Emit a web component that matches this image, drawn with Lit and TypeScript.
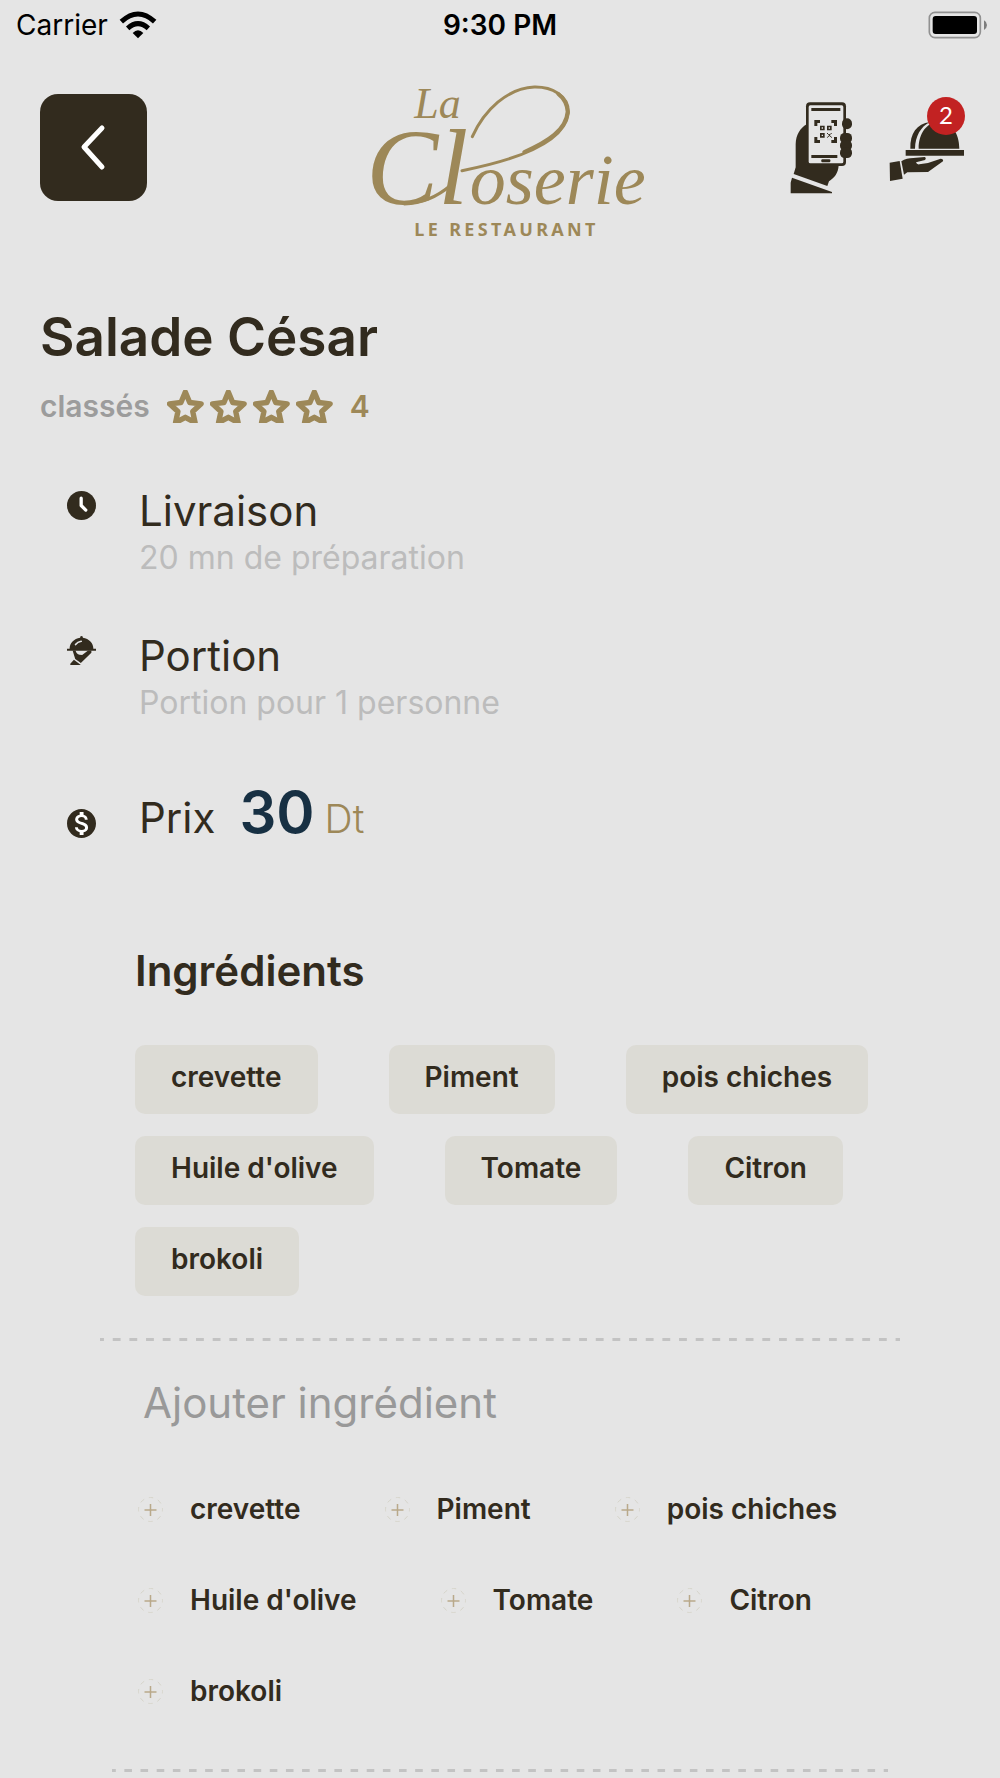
import { LitElement, html, css } from "lit";
import { customElement, property } from "lit/decorators.js";

const INGREDIENTS = ["crevette", "Piment", "pois chiches", "Huile d'olive", "Tomate", "Citron", "brokoli"];

const clockIcon = html`<svg class="glyph" viewBox="0 0 88 88" aria-hidden="true">
  <circle cx="44" cy="44" r="44" fill="#322b1e" />
  <path d="M43 22v22l14 14" fill="none" stroke="#fff" stroke-width="10" stroke-linecap="round" stroke-linejoin="round" />
</svg>`;

const portionIcon = html`<svg class="glyph" viewBox="80 498 88 88" aria-hidden="true">
  <path fill="#322b1e" d="M88 537c0-18 13-31 32-34v-3q4-4 8 0v3c19 3 32 16 32 34h8v6H80v-6z" />
  <path fill="none" stroke="#e5e5e5" stroke-width="5" stroke-linecap="round" d="M106 524q6-8 17-10" />
  <path fill="#322b1e" d="M97 542h9q2 10 12 13l8 1 18-14h10v7l-32 31-17-12zM90 586v-4l11-12 21 16z" />
</svg>`;

const priceIcon = html`<svg class="glyph" viewBox="2 2 20 20" aria-hidden="true">
  <circle cx="12" cy="12" r="9" fill="#fff" />
  <path fill="#322b1e" d="M12 2C6.48 2 2 6.48 2 12s4.48 10 10 10 10-4.48 10-10S17.52 2 12 2zm1.41 16.09V20h-2.67v-1.93c-1.71-.36-3.16-1.46-3.27-3.4h1.96c.1 1.05.82 1.87 2.65 1.87 1.96 0 2.4-.98 2.4-1.59 0-.83-.44-1.61-2.67-2.14-2.48-.6-4.18-1.62-4.18-3.67 0-1.72 1.39-2.84 3.11-3.21V4h2.67v1.95c1.86.45 2.79 1.86 2.85 3.39H14.3c-.05-1.11-.64-1.87-2.22-1.87-1.5 0-2.4.68-2.4 1.64 0 .84.65 1.39 2.67 1.91s4.18 1.39 4.18 3.91c-.02 1.83-1.38 2.83-3.12 3.16z" />
</svg>`;

@customElement("status-bar")
export class StatusBar extends LitElement {
  static styles = css`
    :host {
      display: grid;
      grid-template-columns: 1fr auto 1fr;
      align-items: center;
      height: 50px;
      padding: 0 12px;
      font: 400 28px/50px Inter, sans-serif;
      color: #000;
    }
    .carrier { display: flex; align-items: center; gap: 11px; padding-left: 4px; }
    .wifi { width: 38px; height: 28px; }
    .time { font-weight: 600; }
    .battery { width: 60px; height: 28px; justify-self: end; }
  `;
  render() {
    return html`
      <div class="carrier">
        <span>Carrier</span>
        <svg class="wifi" viewBox="359 29 114 84" role="img" aria-label="Wi-Fi">
          <path d="M366 61Q416 15 466 61M385 81Q416 53 447 81" fill="none" stroke="#000" stroke-width="15" />
          <path d="M400 95Q416 79 432 95L416 111z" />
        </svg>
      </div>
      <time class="time">9:30 PM</time>
      <svg class="battery" viewBox="474 30 180 84" role="img" aria-label="Batterie pleine">
        <rect x="478" y="34" width="153" height="76" rx="17" fill="none" stroke="#919191" stroke-width="5" />
        <rect x="488" y="45" width="133" height="54" rx="9" />
        <path d="M642 58q9 5 9 14t-9 15z" fill="#7d7d7d" />
      </svg>
    `;
  }
}

@customElement("brand-logo")
export class BrandLogo extends LitElement {
  static styles = css`
    :host { display: block; width: 290px; }
    .art { display: block; width: 100%; height: auto; fill: #9d8858; }
    .script { font-family: "Liberation Serif", serif; font-style: italic; }
    .small { font-size: 132px; }
    .large { font-size: 324px; }
    .body { font-size: 216px; }
    .tagline { font: 700 54px "Noto Sans", sans-serif; letter-spacing: 10px; }
    .swash { fill: none; stroke: #9d8858; stroke-width: 9; stroke-linecap: round; }
    .bold { stroke-width: 12; }
  `;
  render() {
    return html`<svg class="art" viewBox="21 0 870 516" role="img" aria-label="La Closerie, le restaurant">
      <text class="script small" x="190" y="144">La</text>
      <text class="script large" x="46" y="402">Cl</text>
      <text class="script body" x="356" y="402">oserie</text>
      <path class="swash" d="M333 302C470 275 640 225 652 130C655 75 600 50 550 51C470 54 400 120 364 200" />
      <path class="swash bold" d="M520 246C590 215 646 180 650 125C648 100 640 86 622 72" />
      <path class="swash" d="M160 402C215 400 262 378 300 345" />
      <text class="tagline" x="190" y="497">LE RESTAURANT</text>
    </svg>`;
  }
}

@customElement("app-header")
export class AppHeader extends LitElement {
  @property({ type: Number }) orders = 2;
  static styles = css`
    :host {
      display: grid;
      grid-template-columns: 1fr auto 1fr;
      align-items: start;
      padding: 20px 34px 0 40px;
    }
    button { border: 0; padding: 0; background: none; cursor: pointer; }
    .back {
      display: grid;
      place-items: center;
      width: 107px;
      height: 107px;
      margin-top: 24px;
      border-radius: 18px;
      background: #322b1e;
    }
    .chevron { width: 28px; height: 48px; }
    .actions { display: flex; justify-self: end; gap: 32px; margin-top: 24px; }
    .action { position: relative; display: block; height: 100px; color: #322b1e; }
    .action svg { display: block; height: 100px; }
    .scan svg { width: 66px; }
    .order svg { width: 80px; }
    .badge {
      position: absolute;
      top: 3px;
      right: 1px;
      width: 38px;
      height: 38px;
      border-radius: 50%;
      background: #c22222;
      color: #fff;
      font: 400 24px/36px Lato, sans-serif;
      text-align: center;
    }
  `;
  render() {
    return html`
      <button class="back" aria-label="Retour">
        <svg class="chevron" viewBox="0 0 28 48" aria-hidden="true">
          <path d="M22 4L4 23l18 20" fill="none" stroke="#fff" stroke-width="5" stroke-linecap="round" stroke-linejoin="round" />
        </svg>
      </button>
      <brand-logo></brand-logo>
      <div class="actions">
        <button class="action scan" aria-label="Scanner le code">
          <svg viewBox="54 282 198 300" fill="currentColor" aria-hidden="true">
            <path d="M110 373C90 385 78 405 77 432V502L71 522L172 558L177 544C192 535 205 520 206 496L110 490zM66 533L186 576V580H62V548z" />
            <rect x="108" y="307" width="120" height="191" rx="12" />
            <rect x="116" y="316" width="104" height="174" rx="5" fill="#e5e5e5" />
            <rect x="216" y="355" width="30" height="33" rx="15" />
            <rect x="210" y="399" width="36" height="31" rx="14" />
            <rect x="210" y="421" width="36" height="31" rx="14" />
            <rect x="210" y="443" width="36" height="31" rx="14" />
            <path d="M124 324h87v9h-87zM124 465h78v9h-78z" />
            <rect x="154" y="478" width="27" height="9" rx="3" />
            <path d="M133 360h17v9h-8v9h-9zM201 360h-17v9h8v9h9zM133 429h17v-9h-8v-9h-9zM201 429h-17v-9h8v-9h9z" />
            <path fill-rule="evenodd" d="M150 377h14v14h-14zm5 5v4h4v-4zM171 377h14v14h-14zm5 5v4h4v-4zM150 399h14v14h-14zm5 5v4h4v-4z" />
            <path d="M171 399l5 5h4l5-5M172 413l5-6h3l5 6" fill="none" stroke="currentColor" stroke-width="3" />
          </svg>
        </button>
        <button class="action order" aria-label="Commandes">
          <svg viewBox="348 282 240 300" fill="currentColor" aria-hidden="true">
            <path d="M446 446C446 400 470 366 508 366C545 366 568 400 568 446zM421 446C420 400 440 371 480 366C452 380 436 408 435 446z" />
            <path d="M407 450H582V467H407z" />
            <path d="M359 488L389 483L398 536L360 543zM394 484Q410 474 430 474L464 471Q470 474 465 480L438 487Q440 494 448 493L474 489L512 476Q521 476 519 484L474 516L412 517L402 524z" />
          </svg>
          <span class="badge">${this.orders}</span>
        </button>
      </div>
    `;
  }
}

@customElement("app-root")
export class AppRoot extends LitElement {
  static styles = css`
    :host {
      display: block;
      min-height: 100vh;
      overflow: hidden;
      background: #e5e5e5;
      color: #322b1e;
      font-family: Inter, sans-serif;
    }
    h1, h2, p, ul { margin: 0; padding: 0; }
    ul { list-style: none; }
    .summary { padding: 61px 40px 0; }
    .title { font-size: 53px; line-height: 68px; font-weight: 600; }
    .rating { display: flex; align-items: center; gap: 17px; height: 40px; margin-top: 15px; font-size: 30px; line-height: 40px; font-weight: 600; color: #9d8858; }
    .rated { color: #9c9c9c; }
    .stars { display: flex; gap: 6px; }
    .star { width: 37px; height: 33px; }
    .facts { padding: 0 67px; margin-top: 61px; }
    .fact { display: flex; gap: 43px; height: 145px; }
    .glyph { width: 29px; height: 29px; margin-top: 4px; flex: none; }
    .name { font-size: 42px; line-height: 48px; font-weight: 400; }
    .note { font-size: 32px; line-height: 46px; color: #bcbcbc; }
    .price { align-items: center; height: 70px; }
    .price .glyph { margin-top: 22px; }
    .amount { display: flex; align-items: baseline; gap: 24px; }
    .value { font-size: 58px; line-height: 70px; font-weight: 600; color: #173043; }
    .unit { font-size: 39px; font-weight: 300; color: #9d8858; margin-left: 10px; }
    .ingredients { padding: 0 100px 0 135px; margin-top: 98px; }
    .heading { font-size: 42px; line-height: 52px; font-weight: 600; }
    .chips { display: flex; flex-wrap: wrap; gap: 22px 71px; margin-top: 48px; }
    .chip { height: 69px; padding: 0 36px; border-radius: 10px; background: #dcdbd5; font-size: 28px; line-height: 65px; font-weight: 600; }
    .rule {
      height: 3px;
      margin: 42px 100px 0;
      background: linear-gradient(to right, #c3c3c3 0 22%, transparent 22% 78%, #c3c3c3 78%) 0 0 / calc(100% / 48) 3px repeat-x;
    }
    .rule.end { margin: 53px 112px 0; }
    .add { padding: 0 100px 0 138px; margin-top: 36px; }
    .subheading { margin-left: 5px; font-size: 42px; line-height: 52px; font-weight: 400; color: #999; }
    .options { display: flex; flex-wrap: wrap; gap: 42px 84px; margin-top: 56px; }
    .option { display: flex; align-items: center; gap: 27px; height: 49px; padding: 0; border: 0; background: none; color: inherit; font: 600 28px/49px Inter, sans-serif; cursor: pointer; }
    .plus { width: 25px; height: 25px; }
  `;

  private star() {
    return html`<svg class="star" viewBox="500 299 109 98" aria-hidden="true">
      <path d="M554 305L567 336L601 340L576 363L583 396L554 380L525 396L532 363L507 340L541 336z" fill="none" stroke="#9d8858" stroke-width="16" stroke-linejoin="round" />
    </svg>`;
  }

  private plus() {
    return html`<svg class="plus" viewBox="0 0 50 50" aria-hidden="true">
      <circle cx="25" cy="25" r="24" fill="none" stroke="#d6d4ca" stroke-width="2" stroke-dasharray="9 10" stroke-dashoffset="5" />
      <path d="M25 14v24M13 26h24" stroke="#b9a98a" stroke-width="3" />
    </svg>`;
  }

  render() {
    return html`
      <status-bar></status-bar>
      <app-header></app-header>
      <main>
        <section class="summary">
          <h1 class="title">Salade César</h1>
          <div class="rating">
            <span class="rated">classés</span>
            <span class="stars">${[1, 2, 3, 4].map(() => this.star())}</span>
            <span>4</span>
          </div>
        </section>
        <section class="facts">
          <div class="fact">
            ${clockIcon}
            <div>
              <h2 class="name">Livraison</h2>
              <p class="note">20 mn de préparation</p>
            </div>
          </div>
          <div class="fact">
            ${portionIcon}
            <div>
              <h2 class="name">Portion</h2>
              <p class="note">Portion pour 1 personne</p>
            </div>
          </div>
          <div class="fact price">
            ${priceIcon}
            <div class="amount">
              <h2 class="name">Prix</h2>
              <p><span class="value">30</span><span class="unit">Dt</span></p>
            </div>
          </div>
        </section>
        <section class="ingredients">
          <h2 class="heading">Ingrédients</h2>
          <ul class="chips">${INGREDIENTS.map((name) => html`<li class="chip">${name}</li>`)}</ul>
        </section>
        <div class="rule"></div>
        <section class="add">
          <h2 class="subheading">Ajouter ingrédient</h2>
          <ul class="options">
            ${INGREDIENTS.map((name) => html`<li><button class="option">${this.plus()}<span>${name}</span></button></li>`)}
          </ul>
        </section>
        <div class="rule end"></div>
      </main>
    `;
  }
}
